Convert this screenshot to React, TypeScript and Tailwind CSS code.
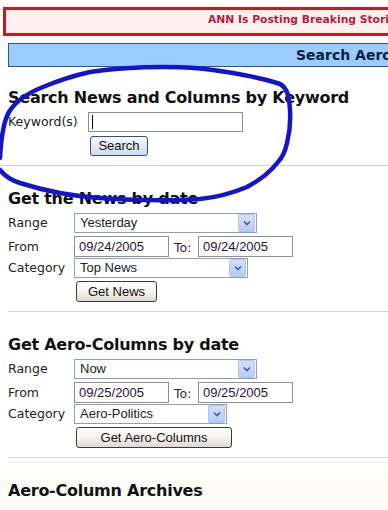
import type { ReactNode } from 'react'

const sans = "font-['DejaVu_Sans',Verdana,sans-serif]"
const arial = "font-['Liberation_Sans',Arial,sans-serif]"

function Heading({ children, className = '' }: { children: ReactNode; className?: string }) {
  return (
    <h2
      className={`${sans} text-[16px] leading-[20px] font-bold tracking-[-0.25px] text-[#111] whitespace-nowrap ${className}`}
    >
      {children}
    </h2>
  )
}

function Label({ children }: { children: ReactNode }) {
  return <span className={`${sans} text-[12.5px] leading-[16px] text-[#222] w-[66px] shrink-0`}>{children}</span>
}

function Select({ value, width }: { value: string; width: string }) {
  return (
    <div
      className={`${width} h-[20px] border border-[#8f9fb5] bg-white flex items-center justify-between pl-[5px] pr-px`}
    >
      <span className={`${arial} text-[13px] leading-[16px] text-[#222]`}>{value}</span>
      <span className="w-[17px] h-[18px] bg-gradient-to-b from-[#d3e0fd] to-[#b8cbf6] border border-[#b0c3ef] rounded-[2px] flex items-center justify-center">
        <svg width="8" height="6" viewBox="0 0 8 6">
          <path d="M1 1.5 L4 4.5 L7 1.5" fill="none" stroke="#4a5d84" strokeWidth="1.6" />
        </svg>
      </span>
    </div>
  )
}

function DateInput({ value }: { value: string }) {
  return (
    <div className="w-[95px] h-[21px] border border-[#8a8f96] bg-white flex items-center pl-[4px]">
      <span className={`${arial} text-[13px] leading-[16px] text-[#2a1230]`}>{value}</span>
    </div>
  )
}

function XpButton({ children, width }: { children: ReactNode; width: string }) {
  return (
    <button
      className={`${width} h-[21px] ${arial} text-[13px] leading-[16px] text-[#111] rounded-[3px] border border-[#3a3a3a] bg-gradient-to-b from-[#ffffff] via-[#f4f3ee] to-[#dcdad2]`}
    >
      {children}
    </button>
  )
}

function DateForm({
  range,
  from,
  to,
  category,
  catW,
  button,
  buttonW,
}: {
  range: string
  from: string
  to: string
  category: string
  catW: string
  button: string
  buttonW: string
}) {
  return (
    <div className="flex flex-col">
      <div className="flex items-center h-[20px]">
        <Label>Range</Label>
        <Select value={range} width="w-[183px]" />
      </div>
      <div className="flex items-center h-[21px] mt-[3px]">
        <Label>From</Label>
        <DateInput value={from} />
        <span className={`${sans} text-[12.5px] leading-[16px] text-[#3a1a40] w-[29px] pl-[5px] pt-[3px]`}>
          To:
        </span>
        <DateInput value={to} />
      </div>
      <div className="flex items-center h-[20px] mt-px">
        <Label>Category</Label>
        <Select value={category} width={catW} />
      </div>
      <div className="flex pl-[68px] mt-[3px]">
        <XpButton width={buttonW}>{button}</XpButton>
      </div>
    </div>
  )
}

export default function App() {
  return (
    <div className="relative w-[388px] h-[510px] overflow-hidden bg-white">
      <div className="pt-[7px] pl-[3px]">
        <div className="w-[700px] h-[29px] border-[3px] border-[#c8191f] bg-[#fdf1ef] pl-[202px] flex items-center">
          <span className={`${sans} text-[10.75px] font-bold text-[#b3203a] whitespace-nowrap -mt-[3px]`}>
            ANN Is Posting Breaking Stories Now
          </span>
        </div>
      </div>

      <div className="mt-[7px] ml-[8px] w-[700px] h-[24px] border border-[#2f5686] bg-[#99ccff] pl-[287px] flex items-center">
        <span className={`${sans} text-[14px] font-bold text-[#0f1d3d] whitespace-nowrap`}>
          Search Aero-News Network
        </span>
      </div>

      <div className="pl-[8px]">
        <Heading className="mt-[21px]">Search News and Columns by Keyword</Heading>
        <div className="flex items-center h-[20px] mt-[4px]">
          <span className={`${sans} text-[12.5px] leading-[16px] text-[#222] w-[80px] shrink-0`}>Keyword(s)</span>
          <div className="w-[155px] h-[20px] border border-[#8a8f96] bg-white flex items-center pl-[3px]">
            <span className="w-px h-[14px] bg-black" />
          </div>
        </div>
        <div className="flex pl-[82px] mt-[4px]">
          <button
            className={`w-[58px] h-[20px] ${arial} text-[13px] leading-[16px] text-[#111] rounded-[3px] border border-[#30507e] bg-gradient-to-b from-[#f7f9fd] to-[#cfdaee]`}
          >
            Search
          </button>
        </div>

        <div className="mt-[9px] h-px bg-[#cfcfcf] -ml-[8px]" />

        <Heading className="mt-[23px]">Get the News by date</Heading>
        <div className="mt-[4px]">
          <DateForm
            range="Yesterday"
            from="09/24/2005"
            to="09/24/2005"
            category="Top News"
            catW="w-[174px]"
            button="Get News"
            buttonW="w-[81px]"
          />
        </div>

        <div className="mt-[9px] h-px bg-[#d2d2d2]" />

        <Heading className="mt-[23px]">Get Aero-Columns by date</Heading>
        <div className="mt-[4px]">
          <DateForm
            range="Now"
            from="09/25/2005"
            to="09/25/2005"
            category="Aero-Politics"
            catW="w-[153px]"
            button="Get Aero-Columns"
            buttonW="w-[156px]"
          />
        </div>

        <div className="mt-[9px] h-px bg-[#d2d2d2]" />
        <div className="mt-[4px] h-px bg-[#f2f2ee]" />
      </div>

      <div className="mt-[14px] pl-[8px] pt-[4px] h-[40px] bg-[#fcfbf6]">
        <Heading>Aero-Column Archives</Heading>
      </div>

      <svg
        className="absolute inset-0 pointer-events-none"
        width="388"
        height="510"
        viewBox="0 0 388 510"
      >
        <path
          d="M0 158 C1 140 3 122 9 112 C15 102 28 93 43 87 C55 82 72 76 90 72 C110 69 140 67 165 67 C185 67 200 68 213 70 C235 73 262 78 280 84 C287 88 289 95 290 110 C291 125 289 135 287 143 C285 152 283 157 278 162 C272 170 260 180 247 187 C235 192 220 197 200 199 C170 201 130 200 100 198 C70 196 45 191 20 183 C10 180 4 175 0 170"
          fill="none"
          stroke="#1414cc"
          strokeWidth="4.5"
          strokeLinecap="round"
          strokeLinejoin="round"
        />
      </svg>
    </div>
  )
}
